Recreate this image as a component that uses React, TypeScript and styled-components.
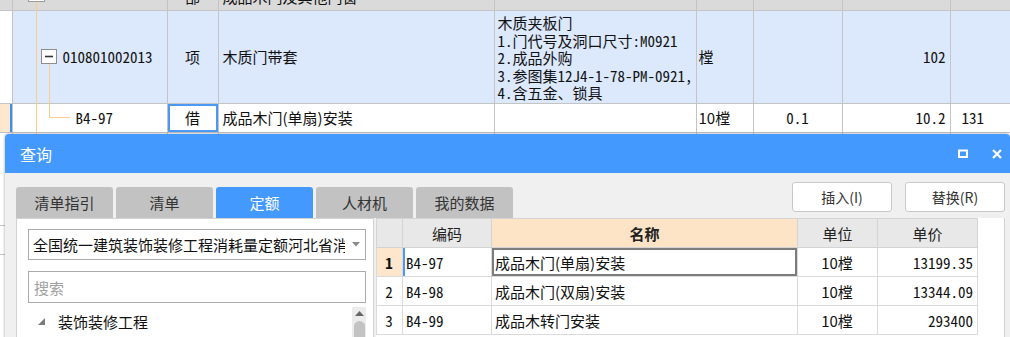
import React from "react";
import styled, { createGlobalStyle } from "styled-components";

const CJK = `"Noto Sans CJK SC", "Microsoft YaHei", sans-serif`;
const SONG = `"Noto Sans Mono CJK SC", "Noto Sans CJK SC", monospace`;

const GlobalStyle = createGlobalStyle`
  html, body { margin: 0; padding: 0; background: #fff; }
  body { font-family: ${CJK}; overflow: hidden; }
  * { box-sizing: border-box; }
`;

const Page = styled.div`
  position: relative;
  width: 1010px;
  height: 337px;
  overflow: hidden;
  background: #fff;
`;

/* ---------- background sheet ---------- */

const Sheet = styled.table`
  border-collapse: collapse;
  border-style: hidden;
  table-layout: fixed;
  width: 1058px;
  font-size: 15px;
  color: #111;
`;

const Row = styled.tr<{ $h: number; $bg?: string }>`
  height: ${(p) => p.$h}px;
  background: ${(p) => p.$bg || "#fff"};
`;

const Cell = styled.td<{
  $bg?: string;
  $align?: "left" | "center" | "right";
  $top?: boolean;
  $song?: boolean;
  $pl?: number;
  $pr?: number;
  $mark?: string;
  $edge?: string;
}>`
  border: 1px solid #c4c4c4;
  padding: 0 ${(p) => (p.$pr != null ? p.$pr : 4)}px 0 ${(p) => (p.$pl != null ? p.$pl : 4)}px;
  background: ${(p) => p.$bg || "transparent"};
  text-align: ${(p) => p.$align || "left"};
  vertical-align: ${(p) => (p.$top ? "top" : "middle")};
  font-family: ${(p) => (p.$song ? SONG : CJK)};
  line-height: 18px;
  white-space: nowrap;
  overflow: hidden;
  box-shadow: ${(p) =>
    p.$mark ? `inset 0 0 0 2px ${p.$mark}` : p.$edge ? `inset -2px 0 0 ${p.$edge}` : "none"};
`;

const HeadClip = styled.div`
  height: 10px;
  overflow: hidden;
`;

const HeadText = styled.div`
  margin-top: -12px;
  line-height: 18px;
`;

const Desc = styled.div`
  padding-top: 3px;
`;

const DescLine = styled.div`
  height: 17.5px;
  line-height: 17.5px;
  font-size: 15px;
  overflow: visible;
`;

const TreeLines = styled.svg`
  position: absolute;
  left: 0;
  top: 0;
  pointer-events: none;
`;

/* ---------- dialog ---------- */

const Dialog = styled.section`
  position: absolute;
  left: 5px;
  top: 134px;
  width: 1005px;
  height: 220px;
  background: #f0f0f0;
  border-radius: 4px 4px 0 0;
  box-shadow: 0 0 3px rgba(0, 0, 0, 0.4);
  display: flex;
  flex-direction: column;
`;

const TitleBar = styled.header`
  height: 39px;
  flex: none;
  background: #4499ff;
  border-radius: 4px 4px 0 0;
  display: flex;
  align-items: center;
  justify-content: space-between;
  padding: 0 8px 0 15px;
`;

const Title = styled.span`
  color: #fff;
  font-size: 16px;
  font-family: ${CJK};
`;

const WinButtons = styled.div`
  display: flex;
  align-items: center;
  gap: 24px;
`;

const Body = styled.div`
  flex: 1;
  display: flex;
  flex-direction: column;
  padding: 9px 5px 0 11px;
`;

const TopRow = styled.div`
  display: flex;
  align-items: flex-start;
  justify-content: space-between;
`;

const Tabs = styled.div`
  display: flex;
  gap: 3px;
  margin-top: 5px;
`;

const Tab = styled.div<{ $active?: boolean }>`
  width: 97px;
  height: 31px;
  border-radius: 3px 3px 0 0;
  background: ${(p) => (p.$active ? "#4499ff" : "#c2c2c2")};
  color: ${(p) => (p.$active ? "#fff" : "#333")};
  font-size: 15px;
  display: flex;
  align-items: center;
  justify-content: center;
`;

const Actions = styled.div`
  display: flex;
  gap: 13px;
`;

const Button = styled.button`
  width: 100px;
  height: 30px;
  background: #fff;
  border: 1px solid #c9c9c9;
  border-radius: 3px;
  font-family: ${CJK};
  font-size: 14px;
  color: #333;
  padding: 0;
`;

const Panels = styled.div`
  flex: 1;
  display: flex;
  gap: 2px;
`;

const LeftPanel = styled.div`
  width: 358px;
  background: #fff;
  border: 1px solid #d2d2d2;
  padding: 10px 7px 0 11px;
  display: flex;
  flex-direction: column;
`;

const Select = styled.div`
  height: 31px;
  border: 1px solid #ababab;
  display: flex;
  align-items: center;
  justify-content: space-between;
  padding: 0 5px 0 4px;
  font-size: 15px;
  color: #111;
`;

const SelectText = styled.span`
  overflow: hidden;
  white-space: nowrap;
  width: 312px;
`;

const Search = styled.div`
  margin-top: 11px;
  height: 32px;
  border: 1px solid #ababab;
  display: flex;
  align-items: center;
  padding-left: 5px;
  font-size: 15px;
  color: #a0a0a0;
`;

const TreeArea = styled.div`
  margin-top: 4px;
  flex: 1;
  display: flex;
`;

const TreeList = styled.div`
  flex: 1;
`;

const TreeRow = styled.div`
  height: 28px;
  display: flex;
  align-items: center;
  gap: 13px;
  padding-left: 10px;
  font-size: 15px;
  color: #111;
`;

const ScrollBar = styled.div`
  width: 14px;
  background: #ececec;
  display: flex;
  flex-direction: column;
  align-items: center;
  padding-top: 4px;
  gap: 5px;
`;

const Thumb = styled.div`
  width: 11px;
  height: 60px;
  border-radius: 6px;
  background: #c3c3c3;
`;

const RightPanel = styled.div`
  flex: 1;
  background: #fff;
  border: 1px solid #d2d2d2;
  border-left: none;
  border-top: none;
`;

const Grid = styled.table`
  border-collapse: collapse;
  table-layout: fixed;
  width: 601px;
  font-size: 15px;
  color: #111;
`;

const Th = styled.th<{ $accent?: boolean }>`
  height: 29px;
  border: 1px solid #d4d4d4;
  background: ${(p) => (p.$accent ? "#fde4c6" : "#e8e8e8")};
  font-weight: ${(p) => (p.$accent ? 700 : 400)};
  font-family: ${CJK};
  color: #222;
  padding: 0;
`;

const Td = styled.td<{
  $align?: "left" | "center" | "right";
  $song?: boolean;
  $bg?: string;
  $shadow?: string;
  $bold?: boolean;
}>`
  height: 29px;
  border: 1px solid #dadada;
  padding: 0 4px 0 3px;
  text-align: ${(p) => p.$align || "left"};
  font-family: ${(p) => (p.$song ? SONG : CJK)};
  font-weight: ${(p) => (p.$bold ? 700 : 400)};
  background: ${(p) => p.$bg || "#fff"};
  box-shadow: ${(p) => p.$shadow || "none"};
  white-space: nowrap;
  overflow: hidden;
`;

const sheetCols = [12, 155, 51, 276, 202, 57, 89, 108, 108];
const gridCols = [26, 89, 306, 80, 100];

const descLines = [
  "木质夹板门",
  "1.门代号及洞口尺寸:M0921",
  "2.成品外购",
  "3.参图集12J4-1-78-PM-0921,",
  "4.含五金、锁具",
];

const items = [
  { code: "B4-97", name: "成品木门(单扇)安装", unit: "10樘", price: "13199.35" },
  { code: "B4-98", name: "成品木门(双扇)安装", unit: "10樘", price: "13344.09" },
  { code: "B4-99", name: "成品木转门安装", unit: "10樘", price: "293400" },
];

const tabs = ["清单指引", "清单", "定额", "人材机", "我的数据"];

export default function App() {
  return (
    <Page>
      <GlobalStyle />
      <Sheet>
        <colgroup>
          {sheetCols.map((w, i) => (
            <col key={i} style={{ width: w }} />
          ))}
        </colgroup>
        <tbody>
          <Row $h={10} $bg="#dadada">
            <Cell />
            <Cell />
            <Cell $align="center">
              <HeadClip>
                <HeadText>部</HeadText>
              </HeadClip>
            </Cell>
            <Cell>
              <HeadClip>
                <HeadText>成品木门及其他门窗</HeadText>
              </HeadClip>
            </Cell>
            <Cell />
            <Cell />
            <Cell />
            <Cell />
            <Cell />
          </Row>
          <Row $h={93} $bg="#dce8fc">
            <Cell $bg="#fff" />
            <Cell $song $pl={50}>010801002013</Cell>
            <Cell $align="center">项</Cell>
            <Cell>木质门带套</Cell>
            <Cell $top $song $pl={3}>
              <Desc>
                {descLines.map((l) => (
                  <DescLine key={l}>{l}</DescLine>
                ))}
              </Desc>
            </Cell>
            <Cell $pl={2}>樘</Cell>
            <Cell />
            <Cell $song $align="right">102</Cell>
            <Cell />
          </Row>
          <Row $h={29}>
            <Cell $bg="#fde7cf" $edge="#3f8ff0" />
            <Cell $song $pl={63}>B4-97</Cell>
            <Cell $align="center" $mark="#4a9af5">借</Cell>
            <Cell>成品木门(单扇)安装</Cell>
            <Cell />
            <Cell $pl={2}>10樘</Cell>
            <Cell $song $align="center">0.1</Cell>
            <Cell $song $align="right">10.2</Cell>
            <Cell $song $pl={11}>131</Cell>
          </Row>
          <Row $h={93}>
            {sheetCols.map((_, i) => (
              <Cell key={i} />
            ))}
          </Row>
          <Row $h={29}>
            {sheetCols.map((_, i) => (
              <Cell key={i} />
            ))}
          </Row>
          <Row $h={80}>
            {sheetCols.map((_, i) => (
              <Cell key={i} />
            ))}
          </Row>
        </tbody>
      </Sheet>

      <TreeLines width="80" height="140" viewBox="0 0 80 140">
        <path d="M36.5 2V140" stroke="#ffcb8a" strokeWidth="1" fill="none" />
        <rect x="28.5" y="-12.5" width="16" height="14" fill="#fff" stroke="#9a9a9a" />
        <path d="M49.5 64V117.5H70" stroke="#ffcb8a" strokeWidth="1" fill="none" />
        <rect x="41.5" y="49.5" width="15" height="14" fill="#fff" stroke="#8e8e8e" />
        <path d="M45 56.5H53" stroke="#333" strokeWidth="1.6" />
      </TreeLines>

      <Dialog>
        <TitleBar>
          <Title>查询</Title>
          <WinButtons>
            <svg width="10" height="9" viewBox="0 0 10 9">
              <path d="M1 1.5H9V8H1Z" fill="none" stroke="#fff" strokeWidth="2" />
            </svg>
            <svg width="10" height="10" viewBox="0 0 10 10">
              <path d="M1 1L9 9M9 1L1 9" stroke="#fff" strokeWidth="2.2" />
            </svg>
          </WinButtons>
        </TitleBar>
        <Body>
          <TopRow>
            <Tabs>
              {tabs.map((t) => (
                <Tab key={t} $active={t === "定额"}>
                  {t}
                </Tab>
              ))}
            </Tabs>
            <Actions>
              <Button>插入(I)</Button>
              <Button>替换(R)</Button>
            </Actions>
          </TopRow>
          <Panels>
            <LeftPanel>
              <Select>
                <SelectText>全国统一建筑装饰装修工程消耗量定额河北省消耗量</SelectText>
                <svg width="8" height="5" viewBox="0 0 8 5">
                  <path d="M0 0H8L4 4.5Z" fill="#8a8a8a" />
                </svg>
              </Select>
              <Search>搜索</Search>
              <TreeArea>
                <TreeList>
                  <TreeRow>
                    <svg width="7" height="7" viewBox="0 0 7 7">
                      <path d="M7 0V7H0Z" fill="#7a7a7a" />
                    </svg>
                    装饰装修工程
                  </TreeRow>
                </TreeList>
                <ScrollBar>
                  <svg width="9" height="5" viewBox="0 0 9 5">
                    <path d="M0 5L4.5 0L9 5Z" fill="#666" />
                  </svg>
                  <Thumb />
                </ScrollBar>
              </TreeArea>
            </LeftPanel>
            <RightPanel>
              <Grid>
                <colgroup>
                  {gridCols.map((w, i) => (
                    <col key={i} style={{ width: w }} />
                  ))}
                </colgroup>
                <thead>
                  <tr>
                    <Th />
                    <Th>编码</Th>
                    <Th $accent>名称</Th>
                    <Th>单位</Th>
                    <Th>单价</Th>
                  </tr>
                </thead>
                <tbody>
                  {items.map((it, i) => (
                    <tr key={it.code}>
                      <Td
                        $align="center"
                        $song
                        $bold={i === 0}
                        $bg={i === 0 ? "#fde6cc" : "#fff"}
                      >
                        {i + 1}
                      </Td>
                      <Td $song $shadow={i === 0 ? "inset 2px 0 0 #4a9af5" : undefined}>
                        {it.code}
                      </Td>
                      <Td $shadow={i === 0 ? "inset 0 0 0 2px #7c7c7c" : undefined}>{it.name}</Td>
                      <Td $align="center">{it.unit}</Td>
                      <Td $align="right" $song>
                        {it.price}
                      </Td>
                    </tr>
                  ))}
                </tbody>
              </Grid>
            </RightPanel>
          </Panels>
        </Body>
      </Dialog>
    </Page>
  );
}
